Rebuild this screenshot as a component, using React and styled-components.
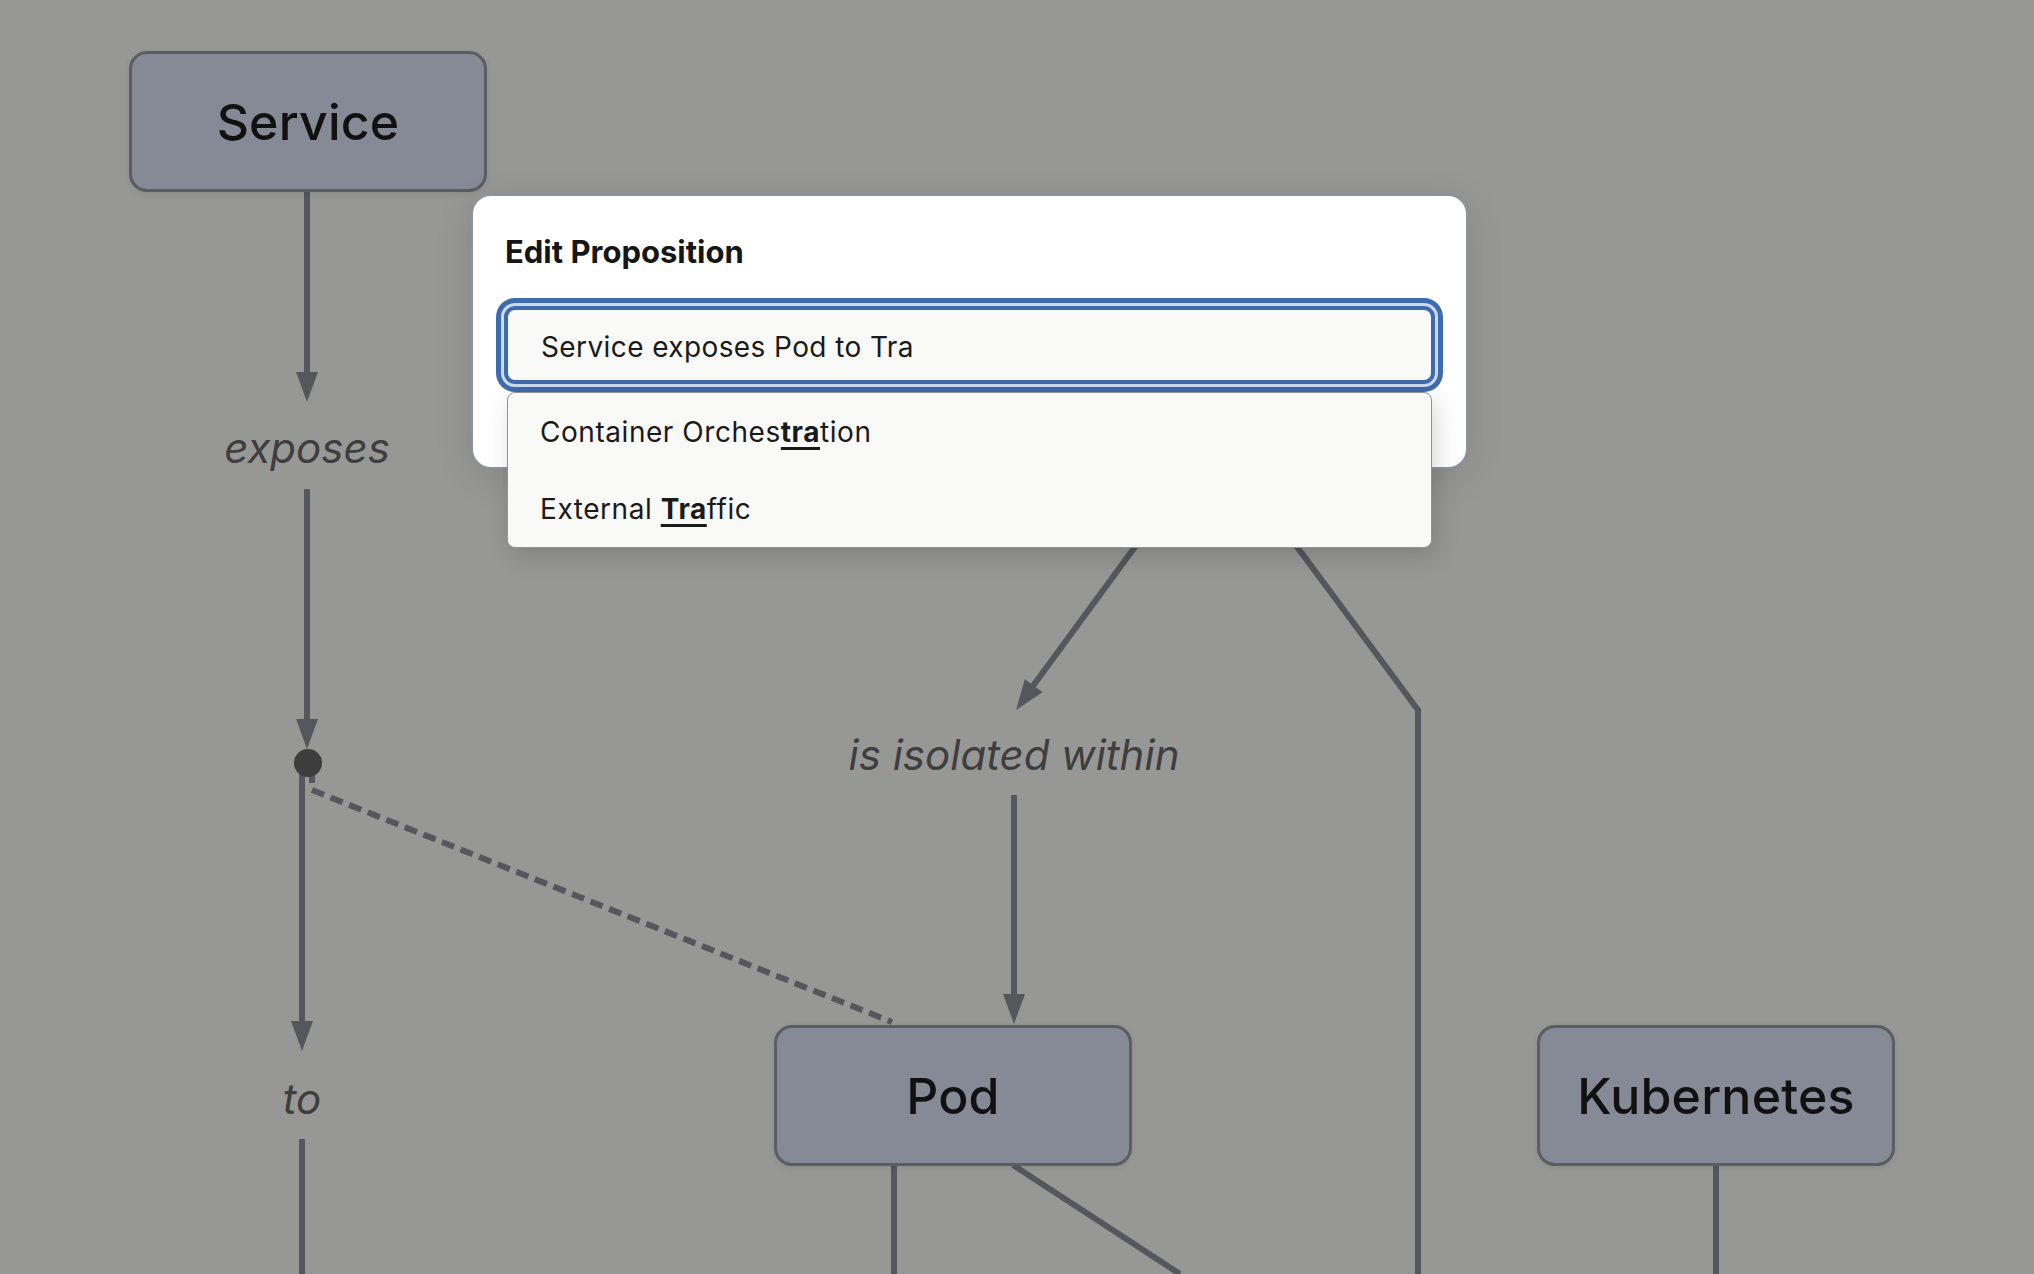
import styled, { createGlobalStyle } from "styled-components";

const GlobalStyle = createGlobalStyle`
  html, body {
    margin: 0;
    padding: 0;
    background: #979796;
    overflow: hidden;
  }
  body {
    font-family: Inter, "Noto Sans", "Liberation Sans", sans-serif;
  }
`

const Canvas = styled.div`
  position: relative;
  width: 2034px;
  height: 1274px;
  background: #979796;
  overflow: hidden;
`

const EdgeLayer = styled.svg`
  position: absolute;
  left: 0;
  top: 0;
  width: 2034px;
  height: 1274px;
`

const Node = styled.div`
  position: absolute;
  left: ${p => p.$x}px;
  top: ${p => p.$y}px;
  box-sizing: border-box;
  width: 358px;
  height: 141px;
  display: flex;
  align-items: center;
  justify-content: center;
  background: #858a96;
  border: 3px solid #5b5d62;
  border-radius: 18px;
  box-shadow: 0 2px 6px rgba(0, 0, 0, 0.08);
  color: #111;
  font-size: 50px;
  font-weight: 500;
  letter-spacing: 0.2px;
`

const EdgeLabel = styled.div`
  position: absolute;
  left: ${p => p.$x}px;
  top: ${p => p.$y}px;
  transform: translate(-50%, -50%);
  white-space: nowrap;
  color: #3e3e3f;
  font-size: 42px;
  font-style: italic;
  font-weight: 400;
`

const Dialog = styled.div`
  position: absolute;
  left: 473px;
  top: 196px;
  box-sizing: border-box;
  width: 993px;
  height: 271px;
  display: flex;
  flex-direction: column;
  gap: 36px;
  padding: 38px 31px 0 31px;
  background: #fff;
  border-radius: 18px;
  box-shadow: 0 0 0 2px #8d939d, 0 8px 40px rgba(0, 0, 0, 0.12);
`

const Title = styled.h2`
  margin: 0 0 0 1px;
  font-size: 31px;
  line-height: 36px;
  font-weight: 700;
  color: #161616;
`

const Field = styled.div`
  position: relative;
`

const Input = styled.input`
  display: block;
  box-sizing: border-box;
  width: 100%;
  height: 78px;
  padding: 4px 0 0 33px;
  border: 4px solid #3e6bad;
  border-radius: 11px;
  background: #f9f9f7;
  box-shadow: 0 0 0 3px #cdd9ec, 0 0 0 8px #3e6bad;
  outline: none;
  font-family: inherit;
  font-size: 28px;
  letter-spacing: 0.4px;
  color: #1a1a1a;
`

const Suggestions = styled.ul`
  position: absolute;
  left: 3px;
  right: 3px;
  top: calc(100% + 8px);
  margin: 0;
  padding: 0;
  list-style: none;
  box-sizing: border-box;
  background: #f9f9f7;
  border: 1.5px solid #929292;
  border-radius: 8px;
  box-shadow: 4px 8px 24px rgba(0, 0, 0, 0.16);
`

const Option = styled.li`
  height: 77px;
  line-height: 79px;
  padding-left: 32px;
  white-space: pre;
  font-size: 28px;
  letter-spacing: 0.55px;
  color: #1a1a1a;
`

const Match = styled.span`
  font-weight: 700;
  text-decoration: underline;
  text-decoration-thickness: 3px;
  text-underline-offset: 5px;
`

const STROKE = "#55575c";

// arrow head with its tip at (x, y), pointing along (dx, dy)
const ArrowHead = ({ x, y, dx, dy, len = 30, half = 11 }) => {
  const l = Math.hypot(dx, dy);
  const ux = dx / l, uy = dy / l;
  const bx = x - ux * len, by = y - uy * len;
  const pts = [
    [x, y],
    [bx - uy * half, by + ux * half],
    [bx + uy * half, by - ux * half],
  ].map(p => p.join(",")).join(" ");
  return <polygon points={pts} fill={STROKE} />;
};

const Edges = () => (
  <EdgeLayer viewBox="0 0 2034 1274">
    <g stroke={STROKE} strokeWidth="6" fill="none">
      {/* Service -> exposes */}
      <line x1="307" y1="192" x2="307" y2="380" />
      {/* exposes -> junction */}
      <line x1="307" y1="489" x2="307" y2="726" />
      {/* junction -> to */}
      <line x1="302" y1="770" x2="302" y2="1030" />
      <line x1="302" y1="1139" x2="302" y2="1274" />
      {/* junction -> Pod (dashed) */}
      <polyline points="312,770 312,790 892,1022" strokeDasharray="13 7" />
      {/* hidden node -> is isolated within */}
      <line x1="1228" y1="420" x2="1030" y2="690" />
      <line x1="1014" y1="795" x2="1014" y2="1000" />
      {/* hidden node -> right rail */}
      <polyline points="1203,420 1418,710 1418,1274" />
      {/* Pod and Kubernetes outgoing */}
      <line x1="894" y1="1165" x2="894" y2="1274" />
      <line x1="1013" y1="1165" x2="1180" y2="1274" />
      <line x1="1716" y1="1165" x2="1716" y2="1274" />
    </g>
    <ArrowHead x={307} y={402} dx={0} dy={1} />
    <ArrowHead x={307} y={749} dx={0} dy={1} />
    <ArrowHead x={302} y={1051} dx={0} dy={1} />
    <ArrowHead x={1016} y={710} dx={-119} dy={163} />
    <ArrowHead x={1014} y={1024} dx={0} dy={1} />
    <circle cx="308" cy="763" r="14" fill="#3d3d3e" />
  </EdgeLayer>
);

export default function App() {
  return (
    <>
      <GlobalStyle />
      <Canvas>
        <Edges />
        <Node $x={129} $y={51}>Service</Node>
        <Node $x={774} $y={1025}>Pod</Node>
        <Node $x={1537} $y={1025}>Kubernetes</Node>
        <EdgeLabel $x={307} $y={447}>exposes</EdgeLabel>
        <EdgeLabel $x={1014} $y={754}>is isolated within</EdgeLabel>
        <EdgeLabel $x={302} $y={1098}>to</EdgeLabel>

        <Dialog>
          <Title>Edit Proposition</Title>
          <Field>
            <Input defaultValue="Service exposes Pod to Tra" spellCheck={false} />
            <Suggestions>
              <Option>Container Orches<Match>tra</Match>tion</Option>
              <Option>External <Match>Tra</Match>ffic</Option>
            </Suggestions>
          </Field>
        </Dialog>
      </Canvas>
    </>
  );
}
